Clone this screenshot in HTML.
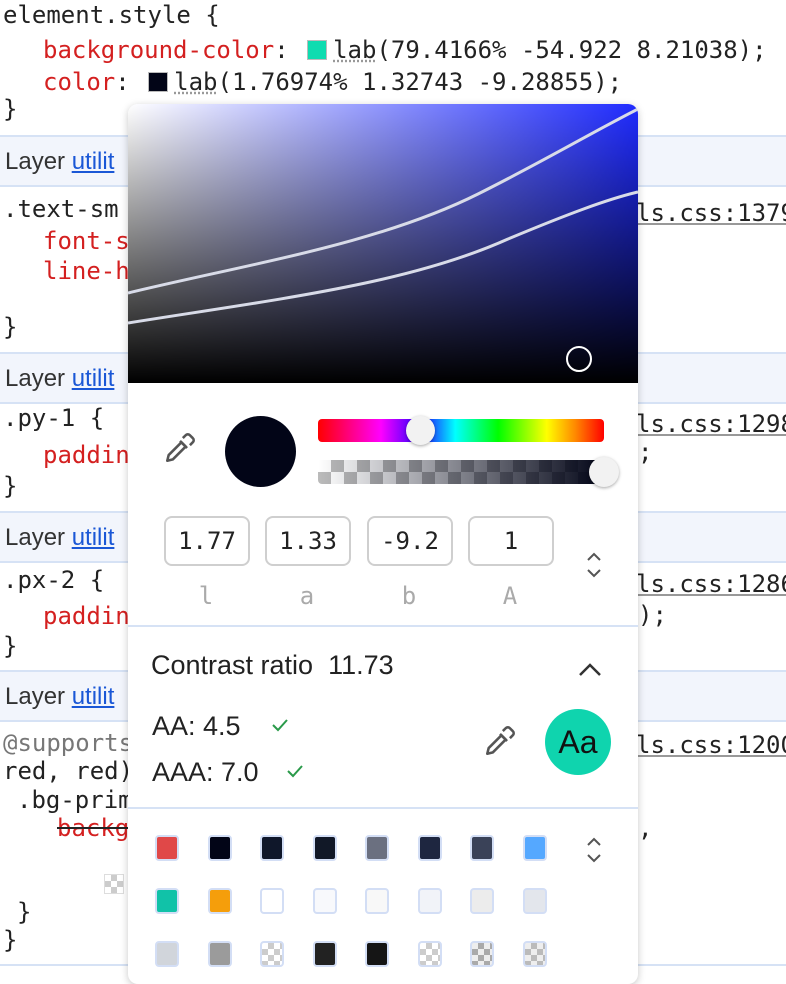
<!DOCTYPE html>
<html><head><meta charset="utf-8"><style>
body{margin:0;width:786px;height:974px;overflow:hidden;background:#fff;position:relative;font-family:"DejaVu Sans Mono","Liberation Mono",monospace;}
.m{position:absolute;font-family:"DejaVu Sans Mono","Liberation Mono",monospace;font-size:24px;color:#222;white-space:pre;line-height:28px;letter-spacing:0px}
.r{color:#d42020}
.u{text-decoration:underline;text-decoration-color:#999}
.layer{position:absolute;left:0;width:786px;background:#f2f5fc;border-top:2px solid #d6e2f5;border-bottom:2px solid #d6e2f5;}
.lt{position:absolute;left:5px;font-family:"Liberation Sans",sans-serif;font-size:24px;color:#333;white-space:pre}
.lt span{color:#1a57d6;text-decoration:underline}
.pop{position:absolute;left:128px;top:104px;width:510px;height:880px;background:#fff;border-radius:10px;box-shadow:0 2px 8px rgba(0,0,0,.22);overflow:hidden}
.grad{position:absolute;left:0;top:0;width:510px;height:279px;background:linear-gradient(to bottom,rgba(0,0,0,0),#000),linear-gradient(to right,#fff,#1f2bff);}
.inp{position:absolute;top:412px;width:86px;height:50px;border:2px solid #cfcfcf;border-radius:8px;box-sizing:border-box;text-align:center;line-height:46px;font-size:24px;color:#222;font-family:"DejaVu Sans Mono",monospace}
.lab{position:absolute;top:478px;width:86px;text-align:center;font-size:24px;color:#aaa;font-family:"DejaVu Sans Mono",monospace}
.sw{position:absolute;width:24px;height:26px;border:2px solid #d3def5;border-radius:4px;box-sizing:border-box}
.chk{background:conic-gradient(#ccc 0 25%,#fff 0 50%,#ccc 0 75%,#fff 0) 0 0/12px 12px}
.sans{position:absolute;font-family:"Liberation Sans",sans-serif;color:#222;white-space:pre}
.sq{display:inline-block;width:18px;height:18px;border:1px solid #bbb;vertical-align:-2px;margin:0 6px 0 4px}
</style></head><body>
<div class="m" style="left:3px;top:1px">element.style {</div>
<div class="m" style="left:43px;top:36px"><span class="r">background-color</span>: <span class="sq" style="background:#0fdcb0"></span><span style="text-decoration:underline dotted #999">lab</span>(79.4166% -54.922 8.21038);</div>
<div class="m" style="left:43px;top:68px"><span class="r">color</span>: <span class="sq" style="background:#020517"></span><span style="text-decoration:underline dotted #999">lab</span>(1.76974% 1.32743 -9.28855);</div>
<div class="m" style="left:3px;top:95px">}</div>

<div class="layer" style="top:135px;height:48px"><div class="lt" style="top:11px">Layer <span>utilit</span></div></div>
<div class="m" style="left:3px;top:195px">.text-sm</div>
<div class="m r" style="left:43px;top:227px">font-s</div>
<div class="m r" style="left:43px;top:257px">line-h</div>
<div class="m" style="left:3px;top:313px">}</div>
<div class="m u" style="left:636px;top:199px">ls.css:1379</div>

<div class="layer" style="top:352px;height:48px"><div class="lt" style="top:11px">Layer <span>utilit</span></div></div>
<div class="m" style="left:3px;top:404px">.py-1 {</div>
<div class="m r" style="left:43px;top:441px">paddin</div>
<div class="m" style="left:3px;top:472px">}</div>
<div class="m u" style="left:636px;top:410px">ls.css:1298</div>
<div class="m" style="left:638px;top:438px">;</div>

<div class="layer" style="top:511px;height:48px"><div class="lt" style="top:11px">Layer <span>utilit</span></div></div>
<div class="m" style="left:3px;top:566px">.px-2 {</div>
<div class="m r" style="left:43px;top:602px">paddin</div>
<div class="m" style="left:3px;top:632px">}</div>
<div class="m u" style="left:636px;top:570px">ls.css:1286</div>
<div class="m" style="left:638px;top:601px">);</div>

<div class="layer" style="top:670px;height:48px"><div class="lt" style="top:11px">Layer <span>utilit</span></div></div>
<div class="m" style="left:3px;top:729px;color:#777">@supports</div>
<div class="m" style="left:3px;top:757px">red, red)</div>
<div class="m" style="left:17px;top:786px">.bg-prim</div>
<div class="m r" style="left:57px;top:814px;text-decoration:line-through;text-decoration-color:#222">backg</div>
<div class="m u" style="left:636px;top:731px">ls.css:1200</div>
<div class="m" style="left:638px;top:814px">,</div>
<div class="chk" style="position:absolute;left:104px;top:874px;width:18px;height:18px;border:1px solid #ddd"></div>
<div class="m" style="left:17px;top:898px">}</div>
<div class="m" style="left:3px;top:926px">}</div>
<div style="position:absolute;left:0;top:964px;width:786px;height:2px;background:#d6e2f5"></div>

<div class="pop">
  <div class="grad"></div>
  <svg style="position:absolute;left:0;top:0" width="510" height="279">
    <path d="M0 189 C120 160 250 140 350 90 C420 55 470 25 510 5" stroke="#d8dbe8" stroke-width="3" fill="none"/>
    <path d="M0 219 C150 195 280 180 380 135 C440 110 480 95 510 88" stroke="#d8dbe8" stroke-width="3" fill="none"/>
    <circle cx="451" cy="255" r="12" stroke="#fff" stroke-width="2" fill="none"/>
  </svg>
  <svg style="position:absolute;left:35px;top:327px" width="34" height="34" viewBox="0 0 24 24" fill="none" stroke="#555" stroke-width="1.8" stroke-linejoin="round"><path d="M3 21l1-4 9-9 3 3-9 9z"/><path d="M12 7l5 5M14 5l2-2a2 2 0 013 0l2 2a2 2 0 010 3l-2 2"/></svg>
  <div style="position:absolute;left:97px;top:312px;width:71px;height:71px;border-radius:50%;background:#020517"></div>
  <div style="position:absolute;left:190px;top:315px;width:286px;height:23px;border-radius:4px;background:linear-gradient(to right,#f00,#f0f 22%,#20f 36%,#0ff 48%,#0f0 63%,#ff0 80%,#f80 90%,#f00)"></div>
  <div style="position:absolute;left:278px;top:312px;width:29px;height:29px;border-radius:50%;background:#f2f2f2;box-shadow:0 1px 3px rgba(0,0,0,.35)"></div>
  <div style="position:absolute;left:190px;top:356px;width:286px;height:24px;border-radius:4px;background:linear-gradient(to right,rgba(2,5,23,0),#020517),conic-gradient(#bbb 0 25%,#fff 0 50%,#bbb 0 75%,#fff 0) 0 0/26px 24px"></div>
  <div style="position:absolute;left:461px;top:353px;width:30px;height:30px;border-radius:50%;background:#f2f2f2;box-shadow:0 1px 3px rgba(0,0,0,.35)"></div>
  <div class="inp" style="left:36px">1.77</div>
  <div class="inp" style="left:137px">1.33</div>
  <div class="inp" style="left:239px">-9.2</div>
  <div class="inp" style="left:340px">1</div>
  <div class="lab" style="left:35px">l</div><div class="lab" style="left:136px">a</div><div class="lab" style="left:238px">b</div><div class="lab" style="left:339px">A</div>
  <svg style="position:absolute;left:456px;top:446px" width="20" height="30" fill="none" stroke="#555" stroke-width="2"><path d="M4 10l6-6 6 6M4 20l6 6 6-6"/></svg>
  <div style="position:absolute;left:0;top:521px;width:510px;height:2px;background:#d6e2f5"></div>
  <div class="sans" style="left:23px;top:546px;font-size:27px">Contrast ratio  11.73</div>
  <svg style="position:absolute;left:449px;top:556px" width="26" height="18" fill="none" stroke="#333" stroke-width="2.5"><path d="M3 15l10-10 10 10"/></svg>
  <div class="sans" style="left:24px;top:607px;font-size:27px">AA: 4.5</div>
  <div class="sans" style="left:24px;top:653px;font-size:27px">AAA: 7.0</div>
  <svg style="position:absolute;left:142px;top:612px" width="20" height="18" fill="none" stroke="#2a9a4a" stroke-width="2"><path d="M3 9l5 5 9-10"/></svg>
  <svg style="position:absolute;left:157px;top:658px" width="20" height="18" fill="none" stroke="#2a9a4a" stroke-width="2"><path d="M3 9l5 5 9-10"/></svg>
  <svg style="position:absolute;left:355px;top:620px" width="34" height="34" viewBox="0 0 24 24" fill="none" stroke="#555" stroke-width="1.8" stroke-linejoin="round"><path d="M3 21l1-4 9-9 3 3-9 9z"/><path d="M12 7l5 5M14 5l2-2a2 2 0 013 0l2 2a2 2 0 010 3l-2 2"/></svg>
  <div style="position:absolute;left:417px;top:605px;width:66px;height:66px;border-radius:50%;background:#0fd4ae;text-align:center;line-height:66px;font-family:'Liberation Sans',sans-serif;font-size:32px;color:#111">Aa</div>
  <div style="position:absolute;left:0;top:703px;width:510px;height:2px;background:#d6e2f5"></div>
  <svg style="position:absolute;left:456px;top:731px" width="20" height="30" fill="none" stroke="#555" stroke-width="2"><path d="M4 10l6-6 6 6M4 20l6 6 6-6"/></svg>
  <div class="sw" style="left:27px;top:731px;background:#e04848"></div>
  <div class="sw" style="left:80px;top:731px;background:#020517"></div>
  <div class="sw" style="left:132px;top:731px;background:#0f172a"></div>
  <div class="sw" style="left:185px;top:731px;background:#111827"></div>
  <div class="sw" style="left:237px;top:731px;background:#6b7080"></div>
  <div class="sw" style="left:290px;top:731px;background:#1e2640"></div>
  <div class="sw" style="left:342px;top:731px;background:#3a4258"></div>
  <div class="sw" style="left:395px;top:731px;background:#55a8ff"></div>
  <div class="sw" style="left:27px;top:784px;background:#11c2a8"></div>
  <div class="sw" style="left:80px;top:784px;background:#f59e0b"></div>
  <div class="sw" style="left:132px;top:784px;background:#fff"></div>
  <div class="sw" style="left:185px;top:784px;background:#f8f9fc"></div>
  <div class="sw" style="left:237px;top:784px;background:#f8f8f8"></div>
  <div class="sw" style="left:290px;top:784px;background:#f1f3f8"></div>
  <div class="sw" style="left:342px;top:784px;background:#ececec"></div>
  <div class="sw" style="left:395px;top:784px;background:#e3e6ec"></div>
  <div class="sw" style="left:27px;top:837px;background:#d1d5db"></div>
  <div class="sw" style="left:80px;top:837px;background:#9b9b9b"></div>
  <div class="sw chk" style="left:132px;top:837px"></div>
  <div class="sw" style="left:185px;top:837px;background:#222"></div>
  <div class="sw" style="left:237px;top:837px;background:#151515"></div>
  <div class="sw chk" style="left:290px;top:837px"></div>
  <div class="sw chk" style="left:342px;top:837px;background:conic-gradient(#aaa 0 25%,#eee 0 50%,#aaa 0 75%,#eee 0) 0 0/12px 12px"></div>
  <div class="sw chk" style="left:395px;top:837px;background:conic-gradient(#bbb 0 25%,#eee 0 50%,#bbb 0 75%,#eee 0) 0 0/12px 12px"></div>
</div>
</body></html>
